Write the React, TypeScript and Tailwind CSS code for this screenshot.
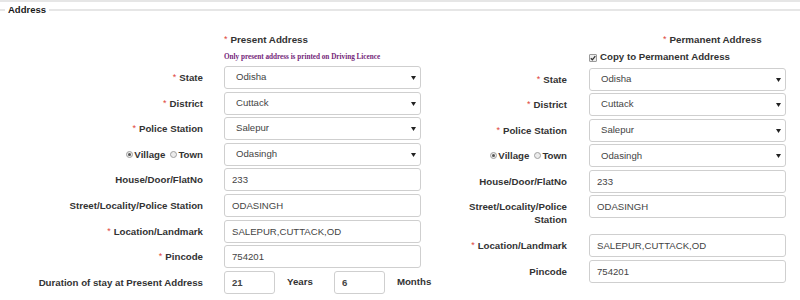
import React from "react";

const FONT = "font-['Liberation_Sans',Arial,sans-serif]";

function Req() {
  return (
    <span className="mr-[3px] inline-block align-top text-[9px] font-normal leading-[12px] text-[#e0433b]">
      *
    </span>
  );
}

function Caret() {
  return (
    <svg
      className="pointer-events-none absolute right-[5px] top-[10px]"
      width="5"
      height="4"
      viewBox="0 0 5 4"
    >
      <path d="M0 0H5L2.5 4Z" fill="#222" />
    </svg>
  );
}

function SelectBox({ value }: { value: string }) {
  return (
    <div className="relative h-[23px] w-[197px]">
      <select
        defaultValue={value}
        className={`${FONT} block h-[23px] w-full appearance-none rounded-[3px] border border-[#cfcfcf] bg-white pl-[11px] text-[9.6px] text-[#444] outline-none`}
      >
        <option>{value}</option>
      </select>
      <Caret />
    </div>
  );
}

function TextBox({ value, className = "w-[197px]" }: { value: string; className?: string }) {
  return (
    <input
      readOnly
      defaultValue={value}
      className={`${FONT} block h-[23px] ${className} rounded-[3px] border border-[#cfcfcf] bg-white px-[7px] text-[9.6px] text-[#444] outline-none`}
    />
  );
}

function Radio({ checked }: { checked?: boolean }) {
  return (
    <span className="inline-flex h-[7px] w-[7px] items-center justify-center rounded-full border border-[#a0a0a0] bg-[#ececec]">
      {checked && <span className="h-[3px] w-[3px] rounded-full bg-[#555]" />}
    </span>
  );
}

function CheckBox() {
  return (
    <span className="inline-flex h-[8px] w-[8px] items-center justify-center rounded-[1px] border border-[#9a9a9a] bg-[#ededed]">
      <svg width="6" height="6" viewBox="0 0 6 6">
        <path d="M0.8 3.2L2.4 4.8L5.3 1.2" stroke="#333" strokeWidth="1.3" fill="none" />
      </svg>
    </span>
  );
}

function VillageTown() {
  return (
    <span className="inline-flex h-[13px] items-center justify-end align-top">
      <Radio checked />
      <span className="ml-[1px]">Village</span>
      <span className="ml-[5px] flex">
        <Radio />
      </span>
      <span className="ml-[1px]">Town</span>
    </span>
  );
}

function Row({
  label,
  labelClass,
  children,
}: {
  label: React.ReactNode;
  labelClass: string;
  children: React.ReactNode;
}) {
  return (
    <div className="flex items-start">
      <div className={`${labelClass} py-[5px] text-right text-[9.7px] font-bold leading-[13px] text-[#333]`}>
        {label}
      </div>
      {children}
    </div>
  );
}

const LEFT_LABEL = "w-[203px] mr-[21px]";
const RIGHT_LABEL = "w-[120px] mr-[22px]";

function AddressRows({ labelClass, permanent }: { labelClass: string; permanent?: boolean }) {
  return (
    <>
      <Row labelClass={labelClass} label={<><Req />State</>}>
        <SelectBox value="Odisha" />
      </Row>
      <Row labelClass={labelClass} label={<><Req />District</>}>
        <SelectBox value="Cuttack" />
      </Row>
      <Row labelClass={labelClass} label={<><Req />Police Station</>}>
        <SelectBox value="Salepur" />
      </Row>
      <Row labelClass={labelClass} label={<VillageTown />}>
        <SelectBox value="Odasingh" />
      </Row>
      <Row labelClass={labelClass} label="House/Door/FlatNo">
        <TextBox value="233" />
      </Row>
      <Row labelClass={labelClass} label="Street/Locality/Police Station">
        <TextBox value="ODASINGH" />
      </Row>
      <Row labelClass={labelClass} label={<><Req />Location/Landmark</>}>
        <TextBox value="SALEPUR,CUTTACK,OD" />
      </Row>
      <Row labelClass={labelClass} label={permanent ? "Pincode" : <><Req />Pincode</>}>
        <TextBox value="754201" />
      </Row>
    </>
  );
}

export default function App() {
  return (
    <div className={`${FONT} h-[300px] w-[800px] overflow-hidden bg-white text-[#333]`}>
      <div className="h-[2px] bg-[#e6e6e6]" />

      {/* fieldset legend */}
      <div className="flex h-[16px] items-center">
        <div className="h-[2px] w-[5px] bg-[#e6e6e6]" />
        <span className="px-[3px] text-[9.5px] font-bold leading-none text-[#1a1a1a]">Address</span>
        <div className="h-[2px] flex-1 bg-[#e6e6e6]" />
      </div>

      <div className="mt-[14.5px] flex">
        {/* Present address */}
        <div className="w-[447px]">
          <div className="ml-[224px] h-[13px] text-[9.8px] font-bold leading-[13px]">
            <Req />
            Present Address
          </div>
          <div className="ml-[224px] mt-[5.5px] h-[13px] font-['Liberation_Serif',serif] text-[7.2px] font-bold leading-[13px] text-[#74267a]">
            Only present address is printed on Driving Licence
          </div>
          <div className="mt-[2px] flex flex-col gap-[2.6px]">
            <AddressRows labelClass={LEFT_LABEL} />
            <Row labelClass={LEFT_LABEL} label="Duration of stay at Present Address">
              <div className="flex items-center text-[9.7px] font-bold">
                <TextBox value="21" className="w-[51px]" />
                <span className="ml-[12px]">Years</span>
                <span className="ml-[21px]">
                  <TextBox value="6" className="w-[51px]" />
                </span>
                <span className="ml-[12px]">Months</span>
              </div>
            </Row>
          </div>
        </div>

        {/* Permanent address */}
        <div className="w-[353px]">
          <div className="ml-[216px] h-[13px] text-[9.8px] font-bold leading-[13px]">
            <Req />
            Permanent Address
          </div>
          <div className="ml-[142px] mt-[5.5px] flex h-[13px] items-center text-[9.7px] font-bold">
            <CheckBox />
            <span className="ml-[3px]">Copy to Permanent Address</span>
          </div>
          <div className="mt-[3.5px] flex flex-col gap-[2.6px]">
            <AddressRows labelClass={RIGHT_LABEL} permanent />
          </div>
        </div>
      </div>
    </div>
  );
}
